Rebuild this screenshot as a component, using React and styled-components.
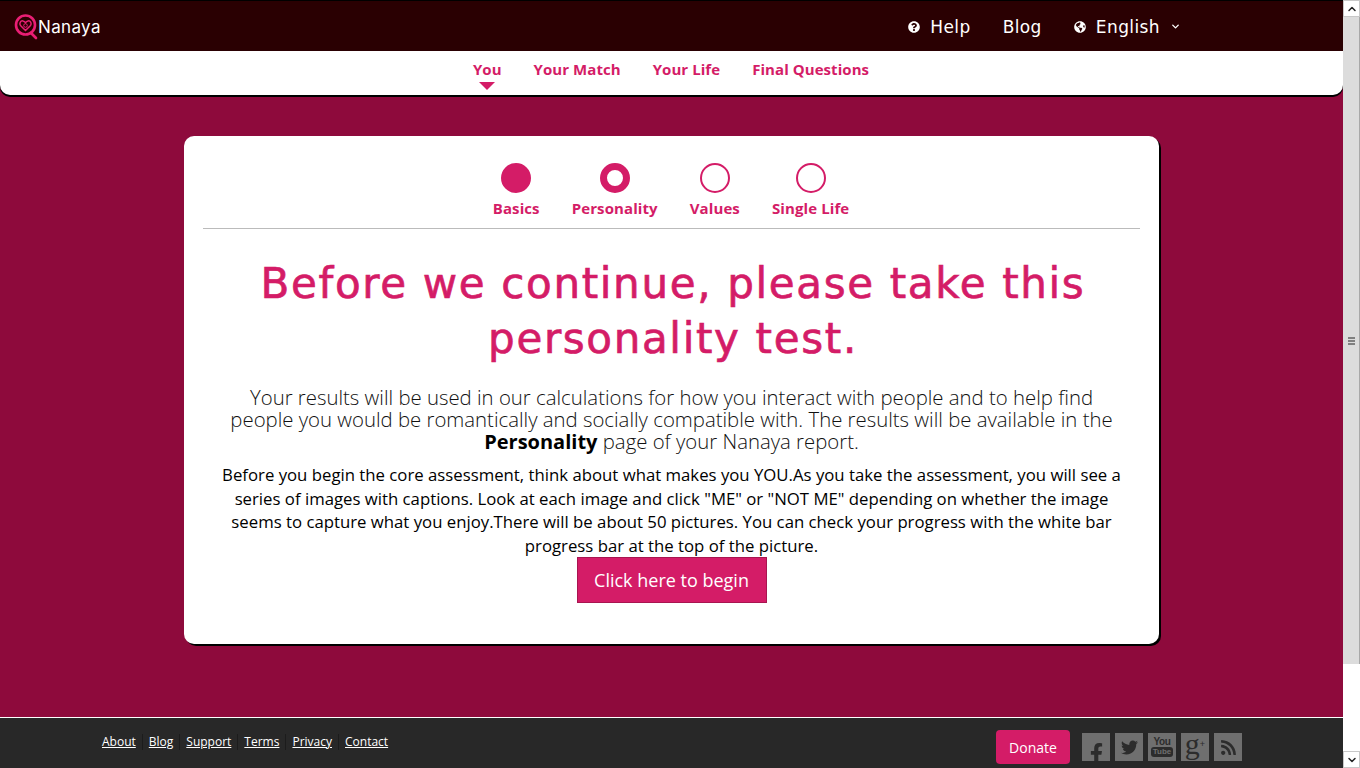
import React from 'react'
import styled, { createGlobalStyle } from 'styled-components'
import { FaQuestionCircle, FaGlobeAmericas, FaFacebookF, FaTwitter, FaRss } from 'react-icons/fa'
import { FiChevronDown, FiChevronUp } from 'react-icons/fi'

const GlobalStyle = createGlobalStyle`
  html, body { margin: 0; padding: 0; height: 100%; overflow: hidden; }
  body { font-family: "Open Sans", "Liberation Sans", sans-serif; }
  #root { height: 100%; }
`

const Shell = styled.div`
  display: flex;
  width: 1360px;
  height: 768px;
`

const Page = styled.div`
  flex: 1;
  min-width: 0;
  display: flex;
  flex-direction: column;
  background: #8e0a3c;
`

const Header = styled.header`
  height: 50px;
  border-top: 1px solid #000;
  background: #2a0002;
  display: flex;
  align-items: center;
  justify-content: space-between;
  padding: 0 162px 0 14px;
  color: #fff;
`

const Brand = styled.div`
  display: flex;
  align-items: center;
  font-family: "Inter", sans-serif;
  font-size: 17px;
  font-weight: 400;
  letter-spacing: 0.35px;
  line-height: 28px;
`

const BrandName = styled.span`
  padding-top: 2px;
`

const TopNav = styled.nav`
  display: flex;
  align-items: center;
  gap: 32px;
  padding-top: 1px;
`

const TopLink = styled.a`
  display: flex;
  align-items: center;
  gap: 10px;
  font-family: "DejaVu Sans", sans-serif;
  font-size: 17px;
  font-weight: 400;
  letter-spacing: 0.4px;
  svg { font-size: 12px; }
`

const Caret = styled(FiChevronDown)`
  && { font-size: 11px; }
  stroke-width: 3;
`

const SubNav = styled.nav`
  height: 44px;
  background: #fff;
  border-radius: 0 0 10px 10px;
  box-shadow: 0 2px 0 #000;
  display: flex;
  justify-content: center;
  gap: 32px;
  padding-right: 1px;
`

const SubLink = styled.a`
  position: relative;
  font-size: 15px;
  font-weight: 700;
  letter-spacing: 0.06px;
  line-height: 20px;
  margin-top: 8px;
  color: #d41c67;
  height: 20px;
  &::after {
    content: '';
    display: ${p => (p.$active ? 'block' : 'none')};
    position: absolute;
    left: 50%;
    top: 23px;
    margin-left: -8px;
    border-left: 8px solid transparent;
    border-right: 8px solid transparent;
    border-top: 8px solid #d41c67;
  }
`

const Main = styled.main`
  flex: 1;
  padding-top: 41px;
`

const Card = styled.section`
  box-sizing: border-box;
  width: 975px;
  height: 508px;
  margin-left: 184px;
  padding: 27px 19px 0;
  background: #fff;
  border-radius: 10px;
  box-shadow: 2px 2px 0 #000;
  text-align: center;
`

const Steps = styled.ol`
  list-style: none;
  margin: 0;
  padding: 0 1px 7px 0;
  border-bottom: 1px solid #bbb;
  display: flex;
  justify-content: center;
  gap: 32px;
`

const Step = styled.li`
  display: flex;
  flex-direction: column;
  align-items: center;
  gap: 3px;
  color: #d41c67;
  font-size: 15px;
  font-weight: 700;
  letter-spacing: 0.1px;
  line-height: 25px;
`

const Dot = styled.span`
  box-sizing: border-box;
  width: 30px;
  height: 30px;
  border-radius: 50%;
  border: ${p => (p.$state === 'done' ? '15px' : p.$state === 'current' ? '7px' : '2px')} solid #d41c67;
  background: #fff;
`

const Title = styled.h1`
  margin: 27px 0 0;
  padding-left: 3px;
  font-family: "DejaVu Sans", sans-serif;
  font-size: 42px;
  font-weight: 400;
  line-height: 55px;
  letter-spacing: 1.65px;
  -webkit-text-stroke: 0.7px #d41c67;
  color: #d41c67;
`

const Lead = styled.p`
  margin: 20px 0 0;
  font-size: 20.35px;
  font-weight: 300;
  line-height: 22px;
  color: #111;
  b { font-size: 20px; font-weight: 700; color: #000; }
`

const Body = styled.p`
  margin: 10px 0 0;
  font-size: 16.75px;
  line-height: 23.6px;
  color: #000;
`

const Begin = styled.a`
  display: inline-block;
  box-sizing: border-box;
  width: 190px;
  height: 46px;
  line-height: 44px;
  background: #d41c67;
  border: 1px solid #a81550;
  color: #fff;
  font-size: 18px;
`

const Footer = styled.footer`
  height: 50px;
  border-top: 1px solid #fff;
  background: #282828;
  display: flex;
  justify-content: space-between;
  padding: 0 101px 0 102px;
`

const FootLinks = styled.div`
  display: flex;
  align-items: flex-start;
  padding-top: 16px;
`

const FootLink = styled.a`
  font-size: 12px;
  line-height: 16px;
  color: #fff;
  text-decoration: underline;
  padding-right: 6px;
  margin-right: 6px;
  border-right: 1px solid #1c1c1c;
  &:last-child { border: 0; margin: 0; padding: 0; }
`

const FootRight = styled.div`
  display: flex;
  align-items: flex-start;
  padding-top: 12px;
`

const Donate = styled.a`
  box-sizing: border-box;
  width: 74px;
  height: 34px;
  line-height: 35px;
  margin-right: 12px;
  text-align: center;
  border-radius: 4px;
  background: #d41c67;
  color: #fff;
  font-size: 14px;
`

const Socials = styled.div`
  display: flex;
  gap: 5px;
  padding-top: 3px;
`

const Social = styled.a`
  width: 28px;
  height: 28px;
  background: #6f6f6f;
  color: #2c2c2c;
  display: flex;
  align-items: center;
  justify-content: center;
  font-size: 17px;
`

const FacebookMark = styled(Social)`
  align-items: flex-end;
  overflow: hidden;
  font-size: 21px;
  svg { margin-bottom: -3px; }
`

const YouTubeMark = styled(Social)`
  flex-direction: column;
  gap: 1px;
  font-family: "Liberation Sans", sans-serif;
  font-weight: 700;
  font-size: 9px;
  line-height: 9px;
`

const YouPart = styled.span`
  font-size: 10px;
  letter-spacing: -0.3px;
`

const TubePart = styled.span`
  background: #2c2c2c;
  color: #6f6f6f;
  border-radius: 3px;
  padding: 0 2px;
  font-size: 8px;
  line-height: 10px;
`

const GoogleMark = styled(Social)`
  font-family: "Liberation Serif", serif;
  font-size: 30px;
  line-height: 28px;
  padding-bottom: 6px;
  box-sizing: border-box;
`

const GooglePlus = styled.span`
  font-family: "Liberation Sans", sans-serif;
  font-size: 9px;
  line-height: 9px;
`

const Scrollbar = styled.div`
  width: 17px;
  display: flex;
  flex-direction: column;
  background: #fff;
`

const ScrollButton = styled.div`
  height: 17px;
  display: flex;
  align-items: center;
  justify-content: center;
  background: #fff;
  border: 1px solid #c8c8c8;
  box-sizing: border-box;
  color: #222;
  font-size: 12px;
  svg { stroke-width: 3; }
`

const ScrollThumb = styled.div`
  flex: 0 0 647px;
  background: #dcdcdc;
  border-right: 1px solid #a8a8a8;
  box-sizing: border-box;
  display: flex;
  flex-direction: column;
  align-items: center;
  justify-content: center;
  gap: 1px;
`

const Grip = styled.i`
  display: block;
  width: 7px;
  height: 2px;
  background: #808080;
`

const ScrollTrack = styled.div`
  flex: 1;
  background: #fff;
`

const Logo = () => (
  <svg width="24" height="28" viewBox="0 0 24 28" fill="none">
    <circle cx="11.5" cy="13" r="9.5" stroke="#e91e74" strokeWidth="2.6" />
    <path d="M17 21l5 5" stroke="#e91e74" strokeWidth="2.6" strokeLinecap="round" />
    <path d="M11.5 18.5 6.5 13.5c-1.6-2 0-5 2.4-4.6 1.2.2 2 .9 2.6 1.8.6-.9 1.4-1.6 2.6-1.8 2.4-.4 4 2.6 2.4 4.6z" stroke="#e91e74" strokeWidth="1.5" />
    <circle cx="11.5" cy="13.5" r="1.8" stroke="#e91e74" strokeWidth="1" />
  </svg>
)

const subLinks = ['You', 'Your Match', 'Your Life', 'Final Questions']
const steps = [
  { label: 'Basics', state: 'done' },
  { label: 'Personality', state: 'current' },
  { label: 'Values', state: 'todo' },
  { label: 'Single Life', state: 'todo' }
]
const footLinks = ['About', 'Blog', 'Support', 'Terms', 'Privacy', 'Contact']

export default function App() {
  return (
    <Shell>
      <GlobalStyle />
      <Page>
        <Header>
          <Brand><Logo /><BrandName>Nanaya</BrandName></Brand>
          <TopNav>
            <TopLink><FaQuestionCircle />Help</TopLink>
            <TopLink>Blog</TopLink>
            <TopLink><FaGlobeAmericas />English<Caret /></TopLink>
          </TopNav>
        </Header>
        <SubNav>
          {subLinks.map((l, i) => <SubLink key={l} $active={i === 0}>{l}</SubLink>)}
        </SubNav>
        <Main>
          <Card>
            <Steps>
              {steps.map(s => (
                <Step key={s.label}><Dot $state={s.state} />{s.label}</Step>
              ))}
            </Steps>
            <Title>Before we continue, please take this<br />personality test.</Title>
            <Lead>
              Your results will be used in our calculations for how you interact with people and to help find<br />
              people you would be romantically and socially compatible with. The results will be available in the<br />
              <b>Personality</b> page of your Nanaya report.
            </Lead>
            <Body>
              Before you begin the core assessment, think about what makes you YOU.As you take the assessment, you will see a<br />
              series of images with captions. Look at each image and click "ME" or "NOT ME" depending on whether the image<br />
              seems to capture what you enjoy.There will be about 50 pictures. You can check your progress with the white bar<br />
              progress bar at the top of the picture.
            </Body>
            <Begin>Click here to begin</Begin>
          </Card>
        </Main>
        <Footer>
          <FootLinks>
            {footLinks.map(l => <FootLink key={l}>{l}</FootLink>)}
          </FootLinks>
          <FootRight>
            <Donate>Donate</Donate>
            <Socials>
              <FacebookMark><FaFacebookF /></FacebookMark>
              <Social><FaTwitter /></Social>
              <YouTubeMark><YouPart>You</YouPart><TubePart>Tube</TubePart></YouTubeMark>
              <GoogleMark>g<GooglePlus>+</GooglePlus></GoogleMark>
              <Social><FaRss /></Social>
            </Socials>
          </FootRight>
        </Footer>
      </Page>
      <Scrollbar>
        <ScrollButton><FiChevronUp /></ScrollButton>
        <ScrollThumb><Grip /><Grip /><Grip /></ScrollThumb>
        <ScrollTrack />
        <ScrollButton><FiChevronDown /></ScrollButton>
      </Scrollbar>
    </Shell>
  )
}
